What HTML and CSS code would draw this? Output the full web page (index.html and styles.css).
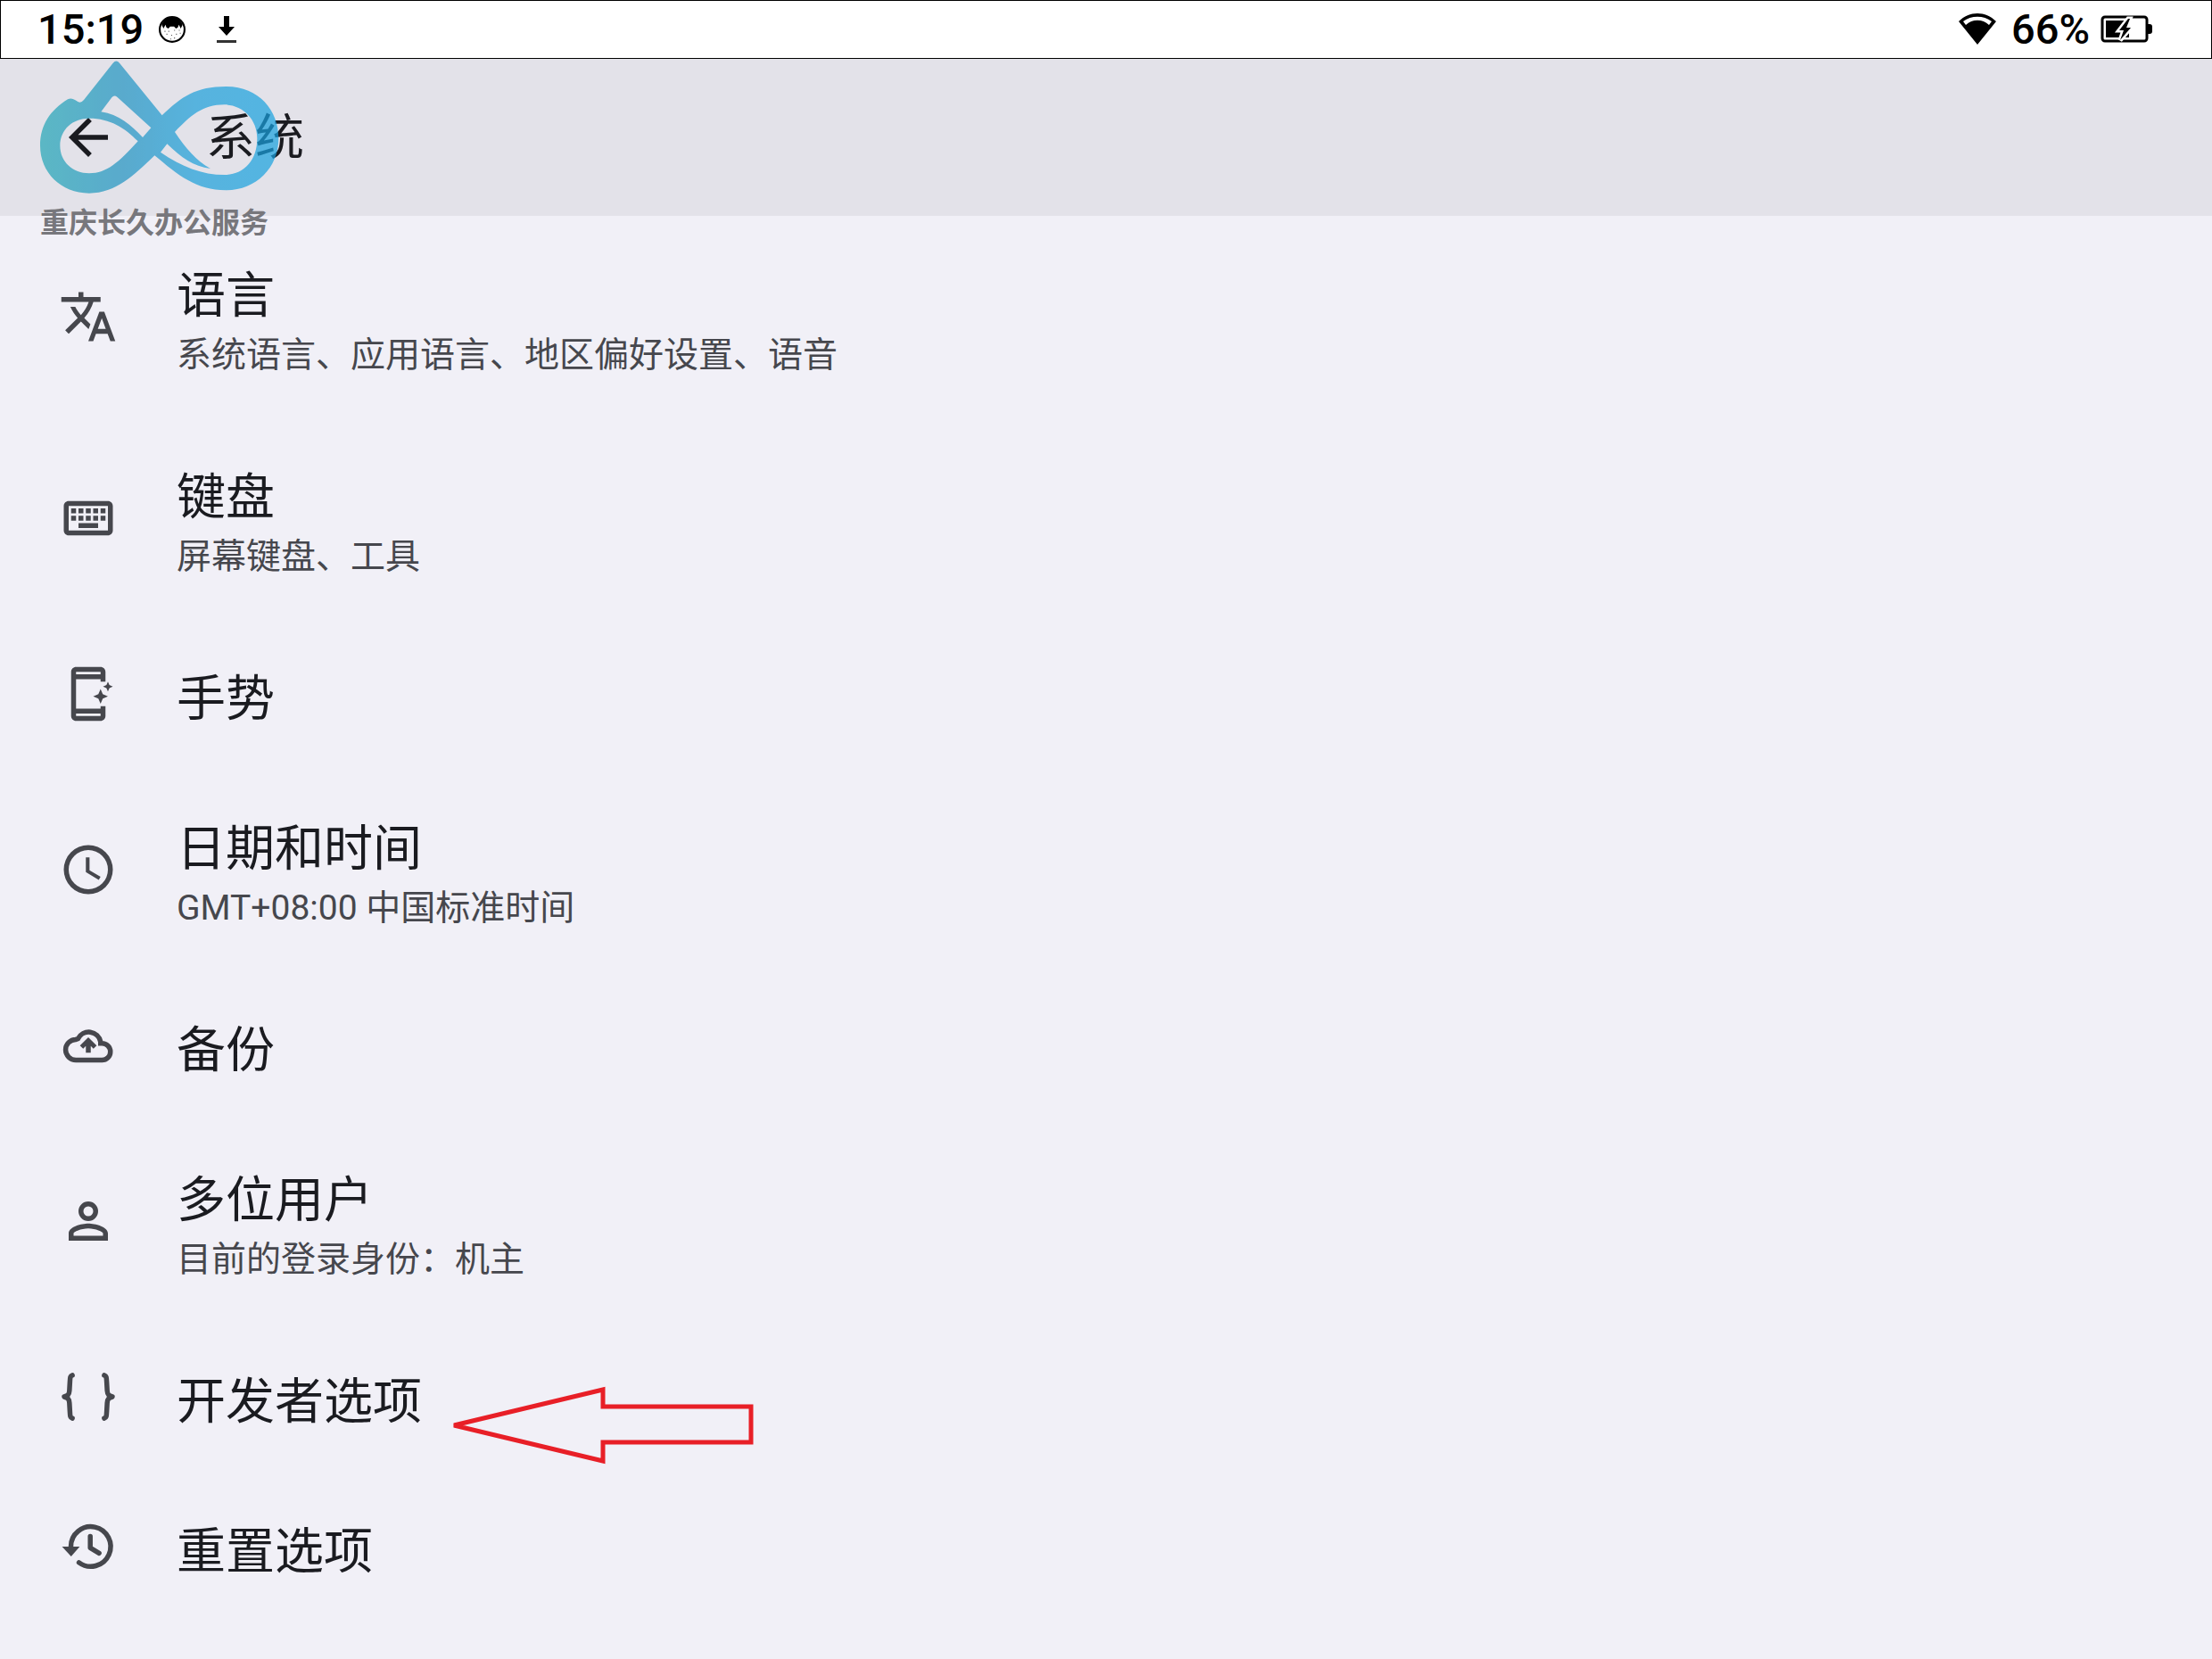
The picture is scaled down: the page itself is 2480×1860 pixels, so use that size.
FILE: index.html
```
<!DOCTYPE html>
<html lang="zh-CN">
  <head>
    <meta charset="utf-8" />
    <meta name="viewport" content="width=device-width, initial-scale=1" />
    <title>系统</title>
    <link rel="stylesheet" href="styles.css">
  </head>
  <body>
    <div class="status-bar">
      <span class="time">15:19</span>
      <svg class="app-icon" viewBox="0 0 28 28">
        <circle cx="14" cy="14" r="13" fill="#fff" stroke="#000" stroke-width="2" />
        <path d="M3 9C6 3 10 1 14 1s8 2 11 8l-2 4-2-4-1 3-2 1-2-2h-4l-2 2-2-1-1-3-2 4z" />
        <path d="M6 16h1M10 16h1M16 15h1M21 15h1M8 19h1M13 20h1M18 19h1M12 24h1M16 23h1M22 18h1" stroke="#555" />
      </svg>
      <svg class="download-icon" viewBox="0 0 24 32">
        <path d="M9 1h6v12h6l-9 10-9-10h6z" />
        <path d="M1 28h22v3H1z" fill="#333" />
      </svg>
      <svg class="wifi-icon" viewBox="0 0 42 36">
        <path fill-rule="evenodd" d="M21 35L0 9C12-3 30-3 42 9zM5 9l3 4C15 6 27 6 34 13l3-4C28 2 14 2 5 9z" />
      </svg>
      <span class="percent">66%</span>
      <svg class="battery-icon" viewBox="0 0 58 32">
        <rect x="2" y="2" width="50" height="27" rx="3" fill="none" stroke="#000" stroke-width="3" />
        <path d="M53 10h2a3 3 0 0 1 3 3v5a3 3 0 0 1-3 3h-2z" />
        <path d="M6 6h26v19H6z" />
        <path class="bolt" d="M31 4L21 17h5l-4 11 12-14h-5l4-10z" />
      </svg>
    </div>

    <header class="app-bar">
      <button type="button" class="back" aria-label="返回">
        <svg class="icon" viewBox="0 0 24 24"><path d="M20 11H7.83l5.59-5.59L12 4l-8 8 8 8 1.41-1.41L7.83 13H20z" /></svg>
      </button>
      <h1>系统</h1>

      <!-- shop watermark, lies over the bar -->
      <div class="watermark">
        <svg viewBox="135 204 804 450">
          <defs>
            <linearGradient id="ring" x1="0" y1="0" x2="1" y2="0">
              <stop offset="0" stop-color="#22a6b6" />
              <stop offset="0.35" stop-color="#1f93c2" />
              <stop offset="0.65" stop-color="#1ca0da" />
              <stop offset="1" stop-color="#18a2e0" />
            </linearGradient>
          </defs>
          <path fill="url(#ring)" fill-rule="evenodd" d="M545 388C610 325 660 291 760 291C870 291 937 370 937 465C937 565 860 640 760 640C660 640 600 590 520 523C450 590 390 650 300 650C205 650 135 580 135 490C135 420 170 370 228 334Q240 328 252 336L262 342Q272 348 282 336L380 212Q391 199 402 212Z
            M202 490C202 545 245 583 300 583C360 583 400 545 464 475C420 430 370 398 300 398C245 398 202 435 202 490Z
            M340 376C400 385 440 420 480 462L508 430L394 326Q384 318 376 328Z
            M588 444C625 500 660 540 708 567C650 560 610 530 562 484L540 512C610 560 680 588 755 588C820 588 865 540 865 465C865 400 815 352 755 352C680 352 640 390 588 444Z" />
        </svg>
        <span>重庆长久办公服务</span>
      </div>
    </header>

    <main>
      <ul class="settings">
        <li>
          <svg class="icon" viewBox="0 0 24 24"><path d="M12.87 15.07l-2.54-2.51.03-.03A17.52 17.52 0 0 0 14.07 6H17V4h-7V2H8v2H1v2h11.17C11.5 7.92 10.44 9.75 9 11.35 8.07 10.32 7.3 9.19 6.69 8h-2c.73 1.63 1.73 3.17 2.98 4.56l-5.09 5.02L4 19l5-5 3.11 3.11.76-2.04zM18.5 10h-2L12 22h2l1.12-3h4.75L21 22h2l-4.5-12zm-2.62 7l1.62-4.33L19.12 17h-3.24z" /></svg>
          <a href="#language"><span class="title">语言</span><span class="summary">系统语言、应用语言、地区偏好设置、语音</span></a>
        </li>
        <li>
          <svg class="icon" viewBox="0 0 24 24"><path d="M20 7v10H4V7h16m0-2H4c-1.1 0-2 .9-2 2v10c0 1.1.9 2 2 2h16c1.1 0 2-.9 2-2V7c0-1.1-.9-2-2-2zm-9 3h2v2h-2V8zm0 3h2v2h-2v-2zM8 8h2v2H8V8zm0 3h2v2H8v-2zm-3 0h2v2H5v-2zm0-3h2v2H5V8zm3 6h8v2H8v-2zm6-3h2v2h-2v-2zm0-3h2v2h-2V8zm3 3h2v2h-2v-2zm0-3h2v2h-2V8z" /></svg>
          <a href="#keyboard"><span class="title">键盘</span><span class="summary">屏幕键盘、工具</span></a>
        </li>
        <li>
          <svg class="icon" viewBox="0 0 24 24">
            <path fill-rule="evenodd" d="M7 1h10c1.1 0 2 .9 2 2v4h-2V6H7v12h10v-1h2v4c0 1.1-.9 2-2 2H7c-1.1 0-2-.9-2-2V3c0-1.1.9-2 2-2zm0 2v1h10V3zm0 17v1h10v-1z" />
            <path d="M17 10l.9 2.1L20 13l-2.1.9L17 16l-.9-2.1L14 13l2.1-.9zM20 7l.6 1.4L22 9l-1.400.6L20 11l-.6-1.4L18 9l1.400-.6z" />
          </svg>
          <a href="#gestures"><span class="title">手势</span></a>
        </li>
        <li>
          <svg class="icon" viewBox="0 0 24 24"><path d="M12 2a10 10 0 1 0 0 20 10 10 0 0 0 0-20zm0 18a8 8 0 1 1 0-16 8 8 0 0 1 0 16zm.5-13H11v6l5.25 3.15.75-1.23-4.5-2.67z" /></svg>
          <a href="#date"><span class="title">日期和时间</span><span class="summary">GMT+08:00 中国标准时间</span></a>
        </li>
        <li>
          <svg class="icon" viewBox="0 0 24 24">
            <path class="line" d="M7 18A4.200 4.200 0 0 1 6.900 9.600L7.800 9.300A4.900 4.900 0 0 1 17 10.500V11.200H17.600A3.400 3.400 0 0 1 17.600 18Z" />
            <path d="M12 8.700l3.400 3.400-1.300 1.300-1.100-1.100V15h-2v-2.700l-1.100 1.100-1.300-1.300z" />
          </svg>
          <a href="#backup"><span class="title">备份</span></a>
        </li>
        <li>
          <svg class="icon" viewBox="0 -2 24 24"><path fill-rule="evenodd" d="M12 2a4 4 0 1 0 0 8 4 4 0 0 0 0-8zm0 2a2 2 0 1 1 0 4 2 2 0 0 1 0-4zM12 11c-2.7 0-8 1.3-8 4v3h16v-3c0-2.7-5.3-4-8-4zm6 5H6v-1c0-.6 3-2 6-2s6 1.4 6 2z" /></svg>
          <a href="#users"><span class="title">多位用户</span><span class="summary">目前的登录身份：机主</span></a>
        </li>
        <li>
          <svg class="icon" viewBox="0 0 24 24"><path class="line brace" d="M5.500 3.200C4.600 3.500 4.600 4 4.500 6L4.300 9.500C4.200 11.300 3.500 11.600 2.200 12C3.500 12.400 4.200 12.700 4.300 14.500L4.500 18C4.600 20 4.600 20.500 5.500 20.800M18.500 3.200C19.400 3.500 19.400 4 19.500 6L19.700 9.500C19.800 11.300 20.500 11.600 21.800 12C20.500 12.400 19.800 12.700 19.700 14.500L19.500 18C19.400 20 19.400 20.500 18.500 20.800" /></svg>
          <a href="#developer"><span class="title">开发者选项</span></a>
          <svg class="pointer" viewBox="0 0 340 88"><path d="M4 44L171 4v19h166v40H171v21z" /></svg>
        </li>
        <li>
          <svg class="icon" viewBox="0 0 24 24">
            <path class="line round" d="M4.900 12A8.100 8.100 0 1 1 8.200 18.500M12.800 7.800V12.500L16.400 14.700" />
            <path d="M1.300 12h7.200L5 16z" />
          </svg>
          <a href="#reset"><span class="title">重置选项</span></a>
        </li>
      </ul>
    </main>
  </body>
</html>
```
FILE: styles.css
```
* {
  box-sizing: border-box;
}

body {
  margin: 0;
  min-height: 100vh;
  background: #f1f0f7;
  color: #1a1b20;
  font-family: Roboto, 'Noto Sans CJK SC', sans-serif;
}

.status-bar {
  display: flex;
  align-items: center;
  height: 66px;
  padding: 0 66px 0 41px;
  border: 1px solid #000;
  background: #fff;
  color: #000;
  font-size: 47px;
  font-weight: 500;
  line-height: 64px;
}

.app-icon {
  width: 30px;
  height: 30px;
  margin-left: 17px;
}

.download-icon {
  width: 24px;
  height: 32px;
  margin-left: 34px;
}

.wifi-icon {
  width: 42px;
  height: 36px;
  margin-left: auto;
}

.percent {
  margin: 0 12px 0 17px;
}

.battery-icon {
  width: 58px;
  height: 32px;
}

.bolt {
  stroke: #fff;
  stroke-width: 5;
  paint-order: stroke;
}

.app-bar {
  position: relative;
  display: flex;
  align-items: center;
  height: 176px;
  padding-left: 66px;
  background: #e3e2e9;
}

.back {
  display: flex;
  padding: 0;
  border: 0;
  background: none;
  color: #1a1b20;
}

h1 {
  margin: 0 0 0 99px;
  font-size: 55px;
  font-weight: 400;
  line-height: 76px;
}

.watermark {
  position: absolute;
  top: 2px;
  left: 45px;
  color: #77777c;
  font-size: 32px;
  font-weight: 700;
  line-height: 48px;
}

.watermark svg {
  display: block;
  width: 268px;
  height: 150px;
  margin-bottom: 8px;
  opacity: 0.7;
}

.icon {
  flex: none;
  width: 66px;
  height: 66px;
  fill: currentColor;
}

.settings {
  list-style: none;
  margin: 0;
  padding: 5px 0 0;
}

.settings li {
  position: relative;
  display: flex;
  align-items: center;
  padding: 46px 66px;
}

.settings .icon {
  margin: 0 66px 10px 0;
  color: #46474d;
}

.settings a {
  color: inherit;
  text-decoration: none;
}

.title,
.summary {
  display: block;
}

.title {
  font-size: 55px;
  line-height: 76px;
}

.summary {
  color: #46474d;
  font-size: 39px;
  line-height: 58px;
}

.line {
  fill: none;
  stroke: currentColor;
  stroke-width: 2;
}

.brace,
.round {
  stroke-linecap: round;
  stroke-linejoin: round;
}

/* red arrow pointing at the developer options */
.pointer {
  position: absolute;
  top: 67px;
  left: 505px;
  width: 340px;
  height: 88px;
  fill: none;
  stroke: #e81f27;
  stroke-width: 5;
}
```
